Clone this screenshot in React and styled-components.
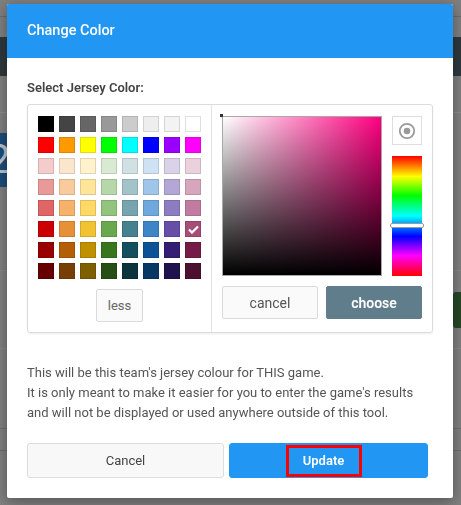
import React from 'react';
import styled, { createGlobalStyle } from 'styled-components';

const GlobalStyle = createGlobalStyle`
  html, body { margin: 0; padding: 0; }
  body {
    font-family: Roboto, "Liberation Sans", sans-serif;
    background: #7f7f7f;
  }
`;

const palette = [
  ['#000000', '#444444', '#666666', '#999999', '#cccccc', '#eeeeee', '#f3f3f3', '#ffffff'],
  ['#ff0000', '#ff9900', '#ffff00', '#00ff00', '#00ffff', '#0000ff', '#9900ff', '#ff00ff'],
  ['#f4cccc', '#fce5cd', '#fff2cc', '#d9ead3', '#d0e0e3', '#cfe2f3', '#d9d2e9', '#ead1dc'],
  ['#ea9999', '#f9cb9c', '#ffe599', '#b6d7a8', '#a2c4c9', '#9fc5e8', '#b4a7d6', '#d5a6bd'],
  ['#e06666', '#f6b26b', '#ffd966', '#93c47d', '#76a5af', '#6fa8dc', '#8e7cc3', '#c27ba0'],
  ['#cc0000', '#e69138', '#f1c232', '#6aa84f', '#45818e', '#3d85c6', '#674ea7', '#a64d79'],
  ['#990000', '#b45f06', '#bf9000', '#38761d', '#134f5c', '#0b5394', '#351c75', '#741b47'],
  ['#660000', '#783f04', '#7f6000', '#274e13', '#0c343d', '#073763', '#20124d', '#4c1130'],
];

const selected = '#a64d79';

/* dimmed page behind the dialog */
const Page = styled.div`
  width: 461px;
  height: 505px;
  overflow: hidden;
  background: #7f7f7f;
  display: flex;
  flex-direction: column;
`;

const TopStrip = styled.div`
  height: 16px;
  border-bottom: 1px solid #6c6c6c;
  flex-shrink: 0;
`;

const NavBand = styled.div`
  margin-top: 20px;
  height: 39px;
  background: #2e393d;
  flex-shrink: 0;
`;

const Divider = styled.div`
  margin-top: ${p => p.$gap}px;
  border-bottom: 1px solid ${p => p.$color || '#8c8c8c'};
  flex-shrink: 0;
`;

const BgRow = styled.div`
  margin-top: ${p => p.$gap}px;
  height: ${p => p.$h}px;
  display: flex;
  justify-content: ${p => p.$end ? 'flex-end' : 'flex-start'};
  flex-shrink: 0;
`;

const NumberTile = styled.div`
  width: 22px;
  margin-left: -12px;
  background: #1c4d78;
  color: #b9c4cf;
  font-size: 40px;
  line-height: 54px;
  overflow: hidden;
  text-align: right;
`;

const GreenBtn = styled.div`
  width: 12px;
  margin-right: -4px;
  background: #274826;
  border-radius: 3px;
`;

/* dialog */
const Modal = styled.div`
  position: fixed;
  left: 7px;
  top: 4px;
  width: 446px;
  background: #fff;
  border-radius: 2px;
  box-shadow: 0 3px 14px rgba(0, 0, 0, 0.35);
  overflow: hidden;
`;

const Header = styled.div`
  height: 54px;
  background: #2196f3;
  color: #fff;
  font-size: 14.5px;
  font-weight: 500;
  display: flex;
  align-items: center;
  padding: 0 20px;
  padding-bottom: 1px;
  box-sizing: border-box;
`;

const Body = styled.div`
  padding: 20px 20px 20px;
`;

const Label = styled.div`
  font-size: 13px;
  line-height: 20px;
  font-weight: 600;
  color: #444;
  margin-bottom: 6px;
`;

const PickerBox = styled.div`
  display: flex;
  border: 1px solid #dcdcdc;
  border-radius: 3px;
  box-shadow: 0 1px 2px rgba(0, 0, 0, 0.08);
`;

const PalettePane = styled.div`
  width: 163px;
  padding: 11px 10px 10px;
  border-right: 1px solid #e2e2e2;
  display: flex;
  flex-direction: column;
  align-items: center;
`;

const SwatchGrid = styled.div`
  display: grid;
  grid-template-columns: repeat(8, 16px);
  grid-auto-rows: 16px;
  gap: 5px;
`;

const Swatch = styled.div`
  background: ${p => p.$color};
  box-shadow: inset 0 0 0 1px rgba(0, 0, 0, 0.12);
  display: flex;
  align-items: center;
  justify-content: center;
`;

const LessButton = styled.button`
  margin-top: 10px;
  width: 47px;
  height: 33px;
  background: #fafafa;
  border: 1px solid #dadada;
  border-radius: 2px;
  font-family: inherit;
  font-size: 13px;
  color: #666;
  padding: 0;
`;

const PickerPane = styled.div`
  flex: 1;
  padding: 11px 10px 10px 10px;
  display: flex;
  flex-direction: column;
`;

const PickerTop = styled.div`
  display: flex;
  gap: 10px;
`;

const SatArea = styled.div`
  position: relative;
  width: 158px;
  height: 158px;
  border: 1px solid #a8a8a8;
  background:
    linear-gradient(to top, #000, rgba(0, 0, 0, 0)),
    linear-gradient(to right, #fff, rgba(255, 255, 255, 0)),
    #ff0080;
`;

const SatHandle = styled.div`
  position: absolute;
  left: -3px;
  top: -3px;
  width: 3px;
  height: 3px;
  background: #333;
`;

const SideCol = styled.div`
  width: 30px;
  display: flex;
  flex-direction: column;
  gap: 11px;
`;

const ClearBtn = styled.div`
  height: 29px;
  border: 1px solid #ddd;
  box-sizing: border-box;
  display: flex;
  align-items: center;
  justify-content: center;
`;

const HueBar = styled.div`
  position: relative;
  height: 120px;
  background: linear-gradient(to bottom, #f00 0%, #ff0 17%, #0f0 33%, #0ff 50%, #00f 67%, #f0f 83%, #f00 100%);
`;

const HueHandle = styled.div`
  position: absolute;
  left: -2px;
  right: -2px;
  top: 67px;
  height: 3px;
  background: #fff;
  border: 1px solid #999;
  border-radius: 2px;
`;

const PickerButtons = styled.div`
  margin-top: 10px;
  display: grid;
  grid-template-columns: 96px 96px;
  justify-content: space-between;
`;

const SmallBtn = styled.button`
  height: 33px;
  border-radius: 2px;
  font-family: inherit;
  font-size: 14px;
  padding: 0;
  background: ${p => p.$primary ? '#607d8b' : '#fafafa'};
  color: ${p => p.$primary ? '#fff' : '#555'};
  font-weight: ${p => p.$primary ? 600 : 400};
  border: 1px solid ${p => p.$primary ? '#607d8b' : '#dadada'};
`;

const Note = styled.p`
  margin: 30px 0 0;
  font-size: 13px;
  line-height: 20px;
  color: #555;
  white-space: nowrap;
`;

const Footer = styled.div`
  margin-top: 20px;
  display: grid;
  grid-template-columns: 197px 199px;
  gap: 5px;
`;

const FooterBtn = styled.button`
  height: 35px;
  border-radius: 3px;
  font-family: inherit;
  font-size: 13px;
  padding: 0;
  display: flex;
  align-items: center;
  justify-content: center;
  background: ${p => p.$primary ? '#2196f3' : '#f8f8f8'};
  color: ${p => p.$primary ? '#fff' : '#444'};
  font-weight: ${p => p.$primary ? 600 : 400};
  border: 1px solid ${p => p.$primary ? '#2196f3' : '#dcdcdc'};
`;

const Highlight = styled.span`
  width: 76px;
  height: 32px;
  margin-right: 10px;
  box-sizing: border-box;
  border: 3px solid #ff0000;
  display: flex;
  align-items: center;
  justify-content: center;
`;

const Check = () => (
  <svg width="11" height="9" viewBox="0 0 11 9">
    <polyline points="1,4.5 4,7.5 10,1.5" fill="none" stroke="#fff" strokeWidth="2.2" />
  </svg>
);

const RingIcon = () => (
  <svg width="18" height="18" viewBox="0 0 18 18">
    <circle cx="9" cy="9" r="7.2" fill="none" stroke="#999" strokeWidth="1.8" />
    <circle cx="9" cy="9" r="3.3" fill="#999" />
  </svg>
);

export default function App() {
  return (
    <>
      <GlobalStyle />
      <Page>
        <TopStrip />
        <NavBand />
        <Divider $gap={36} />
        <BgRow $gap={20} $h={54}>
          <NumberTile>2</NumberTile>
        </BgRow>
        <Divider $gap={83} $color="#878787" />
        <BgRow $gap={21} $h={36} $end>
          <GreenBtn />
        </BgRow>
        <Divider $gap={20} $color="#878787" />
        <Divider $gap={79} $color="#6e6e6e" />
        <Divider $gap={21} $color="#6e6e6e" />
      </Page>

      <Modal>
        <Header>Change Color</Header>
        <Body>
          <Label>Select Jersey Color:</Label>
          <PickerBox>
            <PalettePane>
              <SwatchGrid>
                {palette.flat().map((c, i) => (
                  <Swatch key={i} $color={c}>
                    {c === selected && <Check />}
                  </Swatch>
                ))}
              </SwatchGrid>
              <LessButton>less</LessButton>
            </PalettePane>
            <PickerPane>
              <PickerTop>
                <SatArea>
                  <SatHandle />
                </SatArea>
                <SideCol>
                  <ClearBtn><RingIcon /></ClearBtn>
                  <HueBar>
                    <HueHandle />
                  </HueBar>
                </SideCol>
              </PickerTop>
              <PickerButtons>
                <SmallBtn>cancel</SmallBtn>
                <SmallBtn $primary>choose</SmallBtn>
              </PickerButtons>
            </PickerPane>
          </PickerBox>
          <Note>
            This will be this team's jersey colour for THIS game.<br />
            It is only meant to make it easier for you to enter the game's results<br />
            and will not be displayed or used anywhere outside of this tool.
          </Note>
          <Footer>
            <FooterBtn>Cancel</FooterBtn>
            <FooterBtn $primary><Highlight>Update</Highlight></FooterBtn>
          </Footer>
        </Body>
      </Modal>
    </>
  );
}
